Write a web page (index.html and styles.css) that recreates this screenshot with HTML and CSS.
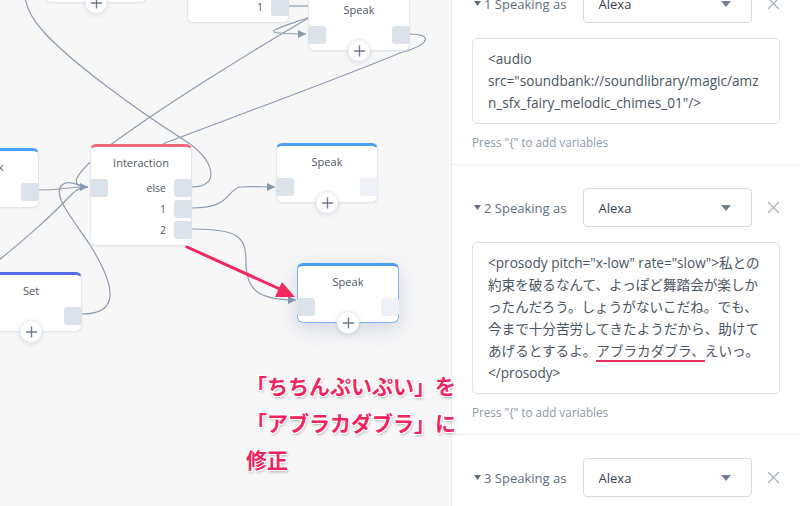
FILE: index.html
```html
<!DOCTYPE html>
<html lang="ja">
<head>
<meta charset="utf-8">
<title>Flow editor</title>
<link rel="stylesheet" href="styles.css">
</head>
<body>
<div class="app">
  <div class="canvas">
    <svg class="wires" width="451" height="506" viewBox="0 0 451 506">
      <defs>
        <marker id="ah" markerUnits="userSpaceOnUse" markerWidth="8" markerHeight="8" refX="8" refY="4" orient="auto">
          <path d="M0,0 L8,4 L0,8 z" fill="#8798ad"/>
        </marker>
      </defs>
      <g fill="none" stroke="#8d9db1" stroke-width="1.2">
        <path d="M192,187 C222,187 214,158 184,140 C140,112 70,62 42,30 C33,20 27,8 25,-2"/>
        <path d="M312,16 C250,52 170,102 120,138 C100,152 82,168 77,178 C74,185 80,187 88,187" marker-end="url(#ah)"/>
        <path d="M410,34 C432,34 432,44 400,53 C330,82 230,118 165,143 L150,152"/>
        <path d="M192,208 C232,208 226,190 240,187 C250,186 262,187 275,187" marker-end="url(#ah)"/>
        <path d="M192,229 C238,229 246,236 246,262 C246,290 258,300 296,300" marker-end="url(#ah)"/>
        <path d="M39,190 C62,190 66,187 88,187"/>
        <path d="M-5,263 C25,240 55,212 70,196 C76,190 80,187 88,187"/>
        <path d="M82,314 C118,314 118,290 90,245 C70,215 52,195 62,185 C68,179 78,186 88,187"/>
        <path d="M310,17 C285,26 262,32 280,33 C288,34 296,34 306,34" marker-end="url(#ah)"/>
        <path d="M289,6 L310,6"/>
      </g>
    </svg>

    <div class="node node-speak n-topleft">
      <div class="node-title"></div>
      <div class="port-row"><span class="port"></span><span class="port"></span></div>
      <button class="plus"><svg width="12" height="12" viewBox="0 0 12 12"><path d="M6 0.5V11.5M0.5 6H11.5"/></svg></button>
    </div>

    <div class="node node-interaction n-topint">
      <div class="node-title"></div>
      <div class="int-grid">
        <span class="port pl"></span><span class="int-label"></span><span class="port"></span>
        <span></span><span class="int-label">1</span><span class="port"></span>
      </div>
    </div>

    <div class="node node-speak n-topspeak">
      <div class="node-title">Speak</div>
      <div class="port-row"><span class="port"></span><span class="port"></span></div>
      <button class="plus"><svg width="12" height="12" viewBox="0 0 12 12"><path d="M6 0.5V11.5M0.5 6H11.5"/></svg></button>
    </div>

    <div class="node node-speak n-left">
      <div class="node-title">Speak</div>
      <div class="port-row"><span class="port"></span><span class="port"></span></div>
    </div>

    <div class="node node-interaction n-int">
      <div class="node-title">Interaction</div>
      <div class="int-grid">
        <span class="port"></span><span class="int-label">else</span><span class="port"></span>
        <span></span><span class="int-label">1</span><span class="port"></span>
        <span></span><span class="int-label">2</span><span class="port"></span>
      </div>
    </div>

    <div class="node node-speak n-mid">
      <div class="node-title">Speak</div>
      <div class="port-row"><span class="port"></span><span class="port port-empty"></span></div>
      <button class="plus"><svg width="12" height="12" viewBox="0 0 12 12"><path d="M6 0.5V11.5M0.5 6H11.5"/></svg></button>
    </div>

    <div class="node node-set n-set">
      <div class="node-title">Set</div>
      <div class="port-row"><span class="port"></span><span class="port"></span></div>
      <button class="plus"><svg width="12" height="12" viewBox="0 0 12 12"><path d="M6 0.5V11.5M0.5 6H11.5"/></svg></button>
    </div>

    <div class="node node-speak node-selected n-low">
      <div class="node-title">Speak</div>
      <div class="port-row"><span class="port"></span><span class="port port-empty"></span></div>
      <button class="plus"><svg width="12" height="12" viewBox="0 0 12 12"><path d="M6 0.5V11.5M0.5 6H11.5"/></svg></button>
    </div>

    <svg class="red-arrow" width="451" height="506" viewBox="0 0 451 506">
      <line x1="187" y1="247" x2="282" y2="290" stroke="#f2275f" stroke-width="3" stroke-linecap="round"/>
      <polygon points="295,297 275,297 282,282" fill="#f2275f"/>
    </svg>
  </div>

  <aside class="panel">
    <div class="panel-scroll">
      <section class="variant">
        <div class="variant-head">
          <div class="variant-label"><svg class="tri" width="7" height="5" viewBox="0 0 7 5"><path d="M0 0H7L3.5 5z"/></svg>1 Speaking as</div>
          <div class="select"><span>Alexa</span><svg width="10" height="6" viewBox="0 0 10 6"><path d="M0 0H10L5 6z"/></svg></div>
          <svg class="close" width="13" height="13" viewBox="0 0 13 13"><path d="M1 1L12 12M12 1L1 12"/></svg>
        </div>
        <div class="textbox">
          <div class="ln">&lt;audio</div>
          <div class="ln">src="soundbank://soundlibrary/magic/amz</div>
          <div class="ln">n_sfx_fairy_melodic_chimes_01"/&gt;</div>
        </div>
        <p class="hint">Press "{" to add variables</p>
      </section>

      <section class="variant">
        <div class="variant-head">
          <div class="variant-label"><svg class="tri" width="7" height="5" viewBox="0 0 7 5"><path d="M0 0H7L3.5 5z"/></svg>2 Speaking as</div>
          <div class="select"><span>Alexa</span><svg width="10" height="6" viewBox="0 0 10 6"><path d="M0 0H10L5 6z"/></svg></div>
          <svg class="close" width="13" height="13" viewBox="0 0 13 13"><path d="M1 1L12 12M12 1L1 12"/></svg>
        </div>
        <div class="textbox">
          <div class="ln">&lt;prosody pitch="x-low" rate="slow"&gt;私との</div>
          <div class="ln">約束を破るなんて、よっぽど舞踏会が楽しか</div>
          <div class="ln">ったんだろう。しょうがないこだね。でも、</div>
          <div class="ln">今まで十分苦労してきたようだから、助けて</div>
          <div class="ln">あげるとするよ。<span class="mark">アブラカダブラ、</span>えいっ。</div>
          <div class="ln">&lt;/prosody&gt;</div>
        </div>
        <p class="hint">Press "{" to add variables</p>
      </section>

      <section class="variant">
        <div class="variant-head">
          <div class="variant-label"><svg class="tri" width="7" height="5" viewBox="0 0 7 5"><path d="M0 0H7L3.5 5z"/></svg>3 Speaking as</div>
          <div class="select"><span>Alexa</span><svg width="10" height="6" viewBox="0 0 10 6"><path d="M0 0H10L5 6z"/></svg></div>
          <svg class="close" width="13" height="13" viewBox="0 0 13 13"><path d="M1 1L12 12M12 1L1 12"/></svg>
        </div>
      </section>
    </div>
  </aside>

  <div class="annotation">「ちちんぷいぷい」を<br>「アブラカダブラ」に<br>修正</div>
</div>
</body>
</html>
```

FILE: styles.css
```css
html, body {
  margin: 0;
  padding: 0;
}
body {
  width: 800px;
  height: 506px;
  overflow: hidden;
  font-family: "Open Sans", "Noto Sans CJK JP", sans-serif;
  background: #fff;
}
.app {
  position: relative;
  display: flex;
  width: 800px;
  height: 506px;
  overflow: hidden;
}

/* ---------- canvas ---------- */
.canvas {
  position: relative;
  width: 451px;
  height: 506px;
  flex: 0 0 451px;
  background: #f7f7f8;
  overflow: hidden;
}
.wires, .red-arrow {
  position: absolute;
  left: 0;
  top: 0;
}
.red-arrow { z-index: 5; }

.node {
  position: absolute;
  width: 102px;
  box-sizing: border-box;
  background: #fff;
  border: 1px solid #e3e6ea;
  border-top: 3px solid #4d9ff5;
  border-radius: 6px;
  box-shadow: 0 1px 2px rgba(40, 60, 90, 0.05);
  padding-bottom: 6px;
  z-index: 2;
}
.node-interaction { border-top-color: #f2687c; }
.node-set { border-top-color: #5b6cf0; }
.node-selected {
  border-color: #7ab5f5;
  border-top-color: #4d9ff5;
  box-shadow: 0 6px 20px rgba(70, 100, 140, 0.22);
}
.node-title {
  padding-top: 8px;
  height: 16px;
  line-height: 16px;
  margin-bottom: 8px;
  text-align: center;
  font-size: 11px;
  color: #4d5866;
}
.port-row {
  display: flex;
  justify-content: space-between;
  margin: 0 -1px;
}
.port {
  display: block;
  width: 18px;
  height: 18px;
  border-radius: 3px;
  background: #dce2ea;
}
.port-empty { background: #eef1f5; }
.int-grid {
  display: grid;
  grid-template-columns: 18px 1fr 18px;
  grid-auto-rows: 18px;
  row-gap: 3px;
  margin: 0 -1px;
}
.int-label {
  text-align: right;
  padding-right: 8px;
  font-size: 10.5px;
  line-height: 18px;
  color: #4d5866;
}
.plus {
  position: absolute;
  left: 50%;
  bottom: -12px;
  transform: translateX(-50%);
  width: 23px;
  height: 23px;
  padding: 0;
  border: 1px solid #e8ebef;
  border-radius: 50%;
  background: #fff;
  box-shadow: 0 1px 4px rgba(40, 60, 90, 0.14);
  display: flex;
  align-items: center;
  justify-content: center;
}
.plus svg path {
  stroke: #6f7e8e;
  stroke-width: 1.4;
  fill: none;
}

.n-topleft { left: 45px; top: -57px; }
.n-topint { left: 187px; top: -58px; }
.n-topspeak { left: 308px; top: -9px; }
.n-left { left: -63px; top: 148px; }
.n-int { left: 90px; top: 144px; }
.n-mid { left: 276px; top: 143px; }
.n-set { left: -20px; top: 272px; }
.n-low { left: 297px; top: 263px; }

/* ---------- annotation ---------- */
.annotation {
  position: absolute;
  left: 246px;
  top: 367px;
  z-index: 10;
  font-family: "Noto Sans CJK JP", sans-serif;
  font-weight: 700;
  font-size: 21px;
  line-height: 37px;
  color: #f2245f;
  white-space: nowrap;
  text-shadow:
    1px 0 0 #fff, -1px 0 0 #fff, 0 1px 0 #fff, 0 -1px 0 #fff,
    1px 1px 0 #fff, -1px -1px 0 #fff, 1px -1px 0 #fff, -1px 1px 0 #fff,
    1px 2px 3px rgba(0, 0, 0, 0.3);
}

/* ---------- panel ---------- */
.panel {
  flex: 1;
  border-left: 1px solid #e7eaee;
  background: #fff;
  overflow: hidden;
}
.panel-scroll {
  margin-top: -39px;
}
.variant {
  padding: 23px 20px 14px;
  border-bottom: 1px solid #eceff2;
}
.variant-head {
  display: flex;
  align-items: center;
  height: 39px;
}
.variant-label {
  width: 111px;
  display: flex;
  align-items: center;
  font-size: 13px;
  color: #5f6e7d;
}
.tri {
  margin: 0 3px 0 2px;
}
.tri path { fill: #5f6e7d; }
.select {
  width: 170px;
  height: 39px;
  box-sizing: border-box;
  border: 1px solid #d6dce3;
  border-radius: 4px;
  display: flex;
  align-items: center;
  justify-content: space-between;
  padding: 0 20px 0 15px;
  font-size: 13px;
  color: #39434e;
}
.select svg path { fill: #6f7f90; }
.close {
  margin-left: 15px;
}
.close path {
  stroke: #aab4bf;
  stroke-width: 1.3;
  fill: none;
}
.textbox {
  margin-top: 15px;
  border: 1px solid #dbe1e8;
  border-radius: 5px;
  padding: 9px 15px;
  font-size: 13.6px;
  line-height: 22px;
  color: #4a5563;
}
.ln { white-space: nowrap; }
.mark {
  border-bottom: 2px solid #e8305e;
}
.hint {
  margin: 10px 0 0;
  font-size: 11.7px;
  line-height: 16px;
  color: #8e9aa8;
}
```
